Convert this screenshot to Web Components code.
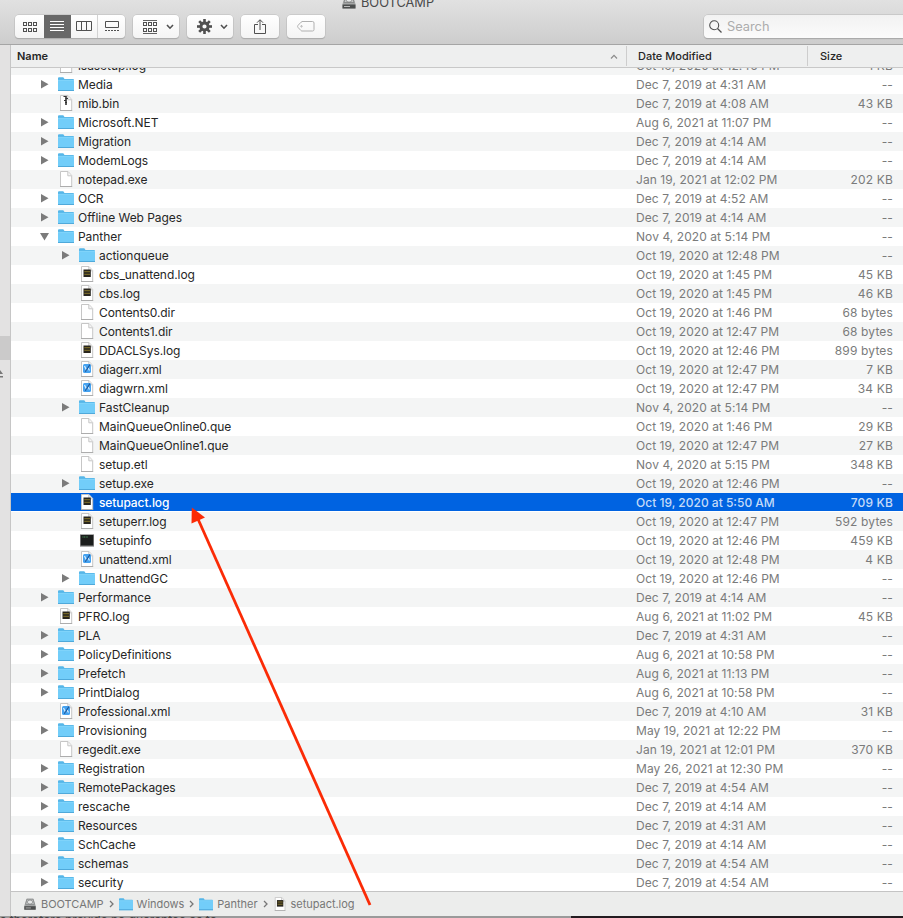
<!DOCTYPE html>
<html lang="en">
<head>
<meta charset="UTF-8">
<title>BOOTCAMP</title>
<style>
  body {
    margin: 0;
    width: 903px;
    height: 918px;
    overflow: hidden;
    font-family: Inter, "Liberation Sans", sans-serif;
    font-size: 12px;
    color: #262626;
  }
</style>
</head>
<body>
<finder-window></finder-window>
<script>
// name | depth | kind | date | size
const FILES = `isasetup.log|0|log|Oct 19, 2020 at 12:46 PM|1 KB
Media|0|folder|Dec 7, 2019 at 4:31 AM|--
mib.bin|0|zip|Dec 7, 2019 at 4:08 AM|43 KB
Microsoft.NET|0|folder|Aug 6, 2021 at 11:07 PM|--
Migration|0|folder|Dec 7, 2019 at 4:14 AM|--
ModemLogs|0|folder|Dec 7, 2019 at 4:14 AM|--
notepad.exe|0|file|Jan 19, 2021 at 12:02 PM|202 KB
OCR|0|folder|Dec 7, 2019 at 4:52 AM|--
Offline Web Pages|0|folder|Dec 7, 2019 at 4:14 AM|--
Panther|0|open|Nov 4, 2020 at 5:14 PM|--
actionqueue|1|folder|Oct 19, 2020 at 12:48 PM|--
cbs_unattend.log|1|log|Oct 19, 2020 at 1:45 PM|45 KB
cbs.log|1|log|Oct 19, 2020 at 1:45 PM|46 KB
Contents0.dir|1|file|Oct 19, 2020 at 1:46 PM|68 bytes
Contents1.dir|1|file|Oct 19, 2020 at 12:47 PM|68 bytes
DDACLSys.log|1|log|Oct 19, 2020 at 12:46 PM|899 bytes
diagerr.xml|1|xml|Oct 19, 2020 at 12:47 PM|7 KB
diagwrn.xml|1|xml|Oct 19, 2020 at 12:47 PM|34 KB
FastCleanup|1|folder|Nov 4, 2020 at 5:14 PM|--
MainQueueOnline0.que|1|file|Oct 19, 2020 at 1:46 PM|29 KB
MainQueueOnline1.que|1|file|Oct 19, 2020 at 12:47 PM|27 KB
setup.etl|1|file|Nov 4, 2020 at 5:15 PM|348 KB
setup.exe|1|folder|Oct 19, 2020 at 12:46 PM|--
setupact.log|1|log|Oct 19, 2020 at 5:50 AM|709 KB
setuperr.log|1|log|Oct 19, 2020 at 12:47 PM|592 bytes
setupinfo|1|exec|Oct 19, 2020 at 12:46 PM|459 KB
unattend.xml|1|xml|Oct 19, 2020 at 12:48 PM|4 KB
UnattendGC|1|folder|Oct 19, 2020 at 12:46 PM|--
Performance|0|folder|Dec 7, 2019 at 4:14 AM|--
PFRO.log|0|log|Aug 6, 2021 at 11:02 PM|45 KB
PLA|0|folder|Dec 7, 2019 at 4:31 AM|--
PolicyDefinitions|0|folder|Aug 6, 2021 at 10:58 PM|--
Prefetch|0|folder|Aug 6, 2021 at 11:13 PM|--
PrintDialog|0|folder|Aug 6, 2021 at 10:58 PM|--
Professional.xml|0|xml|Dec 7, 2019 at 4:10 AM|31 KB
Provisioning|0|folder|May 19, 2021 at 12:22 PM|--
regedit.exe|0|file|Jan 19, 2021 at 12:01 PM|370 KB
Registration|0|folder|May 26, 2021 at 12:30 PM|--
RemotePackages|0|folder|Dec 7, 2019 at 4:54 AM|--
rescache|0|folder|Dec 7, 2019 at 4:14 AM|--
Resources|0|folder|Dec 7, 2019 at 4:31 AM|--
SchCache|0|folder|Dec 7, 2019 at 4:14 AM|--
schemas|0|folder|Dec 7, 2019 at 4:54 AM|--
security|0|folder|Dec 7, 2019 at 4:54 AM|--`.split('\n').map(line => line.split('|'));

const SELECTED = 'setupact.log';

const PAGE = `<path d="M2.500 .5h7.500l3.700 4v11h-11.200z" fill="#fff" stroke="#c6c6c6"/><path d="M9.800 .8v4h3.700" fill="#f6f6f6" stroke="#c6c6c6"/><path d="M2 15.500h12.200" stroke="#adadad"/>`;

const ICONS = {
  folder: `<path d="M0 2.300q0-1 1-1h4.300l1.200 1.700h8.500q1 0 1 1v11h-16z" fill="#56b6e8"/><path d="M0 4h16v10.500h-16z" fill="#72cdf9"/><path d="M0 4.300h16" stroke="#8bd9fc" stroke-width=".7"/><path d="M0 14.500h16" stroke="#4fa9da"/>`,
  file: PAGE,
  log: PAGE + `<path d="M4.500 3.500h7.300v7.500h-7.300z" fill="#29261e"/><path d="M5.300 5.700h5.700M5.300 8.300h5.700" stroke="#a08c2e" stroke-width=".8"/>`,
  zip: PAGE + `<path d="M7 1h2v9h-2z" fill="#5a5a5a"/><path d="M5.500 1.500h2.500M7.500 3.500h2.500M6 5.500h2M7 7.500h2" stroke="#333"/>`,
  xml: PAGE + `<rect x="4" y="3" width="8" height="9" rx="1.500" fill="#45a2f0"/><path d="M5.500 5l2.200 4.500M10.500 9.500l-1.500-2.500" fill="none" stroke="#d8eeff" stroke-width="1.200"/><path d="M6.300 10.800l4.700-7.300" stroke="#1d5798" stroke-width="1.200"/>`,
  exec: `<path d="M1 2.300h14v12.400h-14z" fill="#8a8a8a"/><path d="M1.700 3h12.600v10.500h-12.600z" fill="#1b1d1c"/><path d="M3.500 5h5.500" stroke="#4c9a5c" stroke-dasharray="1 .6"/>`,
  disk: `<path d="M4 2h8l2.500 8v4.500h-13v-4.500z" fill="#a3a5a5"/><path d="M4.500 2.500h7l1.500 6h-10z" fill="#c5c8c8" stroke="#808282" stroke-width=".8"/><ellipse cx="8" cy="5.800" rx="3" ry="2.300" fill="#e6e8e8" stroke="#777" stroke-width=".7"/><path d="M1.500 10.500h13v4h-13z" fill="#4c4e4e"/><path d="M3 12.500h6" stroke="#bbb"/>`
};

class FileIcon extends HTMLElement {
  connectedCallback() {
    this.attachShadow({ mode: 'open' }).innerHTML = `
      <style>
        :host { display: block; flex: none; width: 16px; height: 16px; }
        svg { display: block; width: 100%; height: 100%; }
      </style>
      <svg viewBox="0 0 16 16">${ICONS[this.getAttribute('kind')]}</svg>
    `;
  }
}

class ToolButton extends HTMLElement {
  constructor() {
    super();
    this.attachShadow({ mode: 'open' }).innerHTML = `
      <style>
        :host {
          display: flex;
          box-sizing: border-box;
          height: 23px;
          overflow: hidden;
          border-radius: 4px;
          background: linear-gradient(#fff, #f4f4f4);
          box-shadow: 0 0 0 .5px #bcbcbc, 0 1px 1px #9b9b9b;
        }
      </style>
      <slot></slot>
    `;
  }
}

class FinderToolbar extends HTMLElement {
  constructor() {
    super();
    const grid = (y) => [0, 5, 10].map(x => `<rect x="${x + .5}" y="${y + .5}" width="3" height="3"/>`).join('');
    const chevron = '<svg width="8" height="6" class="bold"><path d="M1 1l3 3.200l3-3.200"/></svg>';
    const teeth = [0, 45, 90, 135, 180, 225, 270, 315]
      .map(a => `<rect x="6.200" y="0" width="2.600" height="4" transform="rotate(${a} 7.500 7.500)"/>`).join('');
    this.attachShadow({ mode: 'open' }).innerHTML = `
      <style>
        :host {
          display: block;
          height: 44px;
          overflow: hidden;
          background: linear-gradient(#e1e1e1, #cdcdcd);
          border-bottom: 1px solid #a5a5a5;
        }
        .title {
          display: flex;
          align-items: center;
          gap: 4px;
          height: 16px;
          margin-top: -6px;
          padding-left: 341px;
          font-size: 12.8px;
          color: #4a4a4a;
        }
        .tools { display: flex; margin: 5px 0 0 15px; }
        .tools > * + * { margin-left: 8px; }
        .seg {
          display: flex;
          align-items: center;
          justify-content: center;
          width: 26px;
          border-right: 1px solid #d2d2d2;
        }
        .seg:first-child { width: 29px; border: 0; }
        .seg:last-child { border: 0; width: 27px; }
        .seg.on { background: #686868; border-color: #686868; }
        .seg.on svg { stroke: #fff; }
        svg { fill: none; stroke: #505050; }
        svg.bold { stroke-width: 1.600; }
        .menu { display: flex; align-items: center; width: 46px; justify-content: space-between; padding: 0 5px 0 10px; box-sizing: border-box; }
        .single { display: flex; align-items: center; justify-content: center; width: 38px; }
        .tools > .search {
          display: flex;
          align-items: center;
          gap: 5px;
          flex: 1;
          margin-left: 379px;
          padding-left: 5px;
          border-radius: 4px 0 0 4px;
          background: linear-gradient(#f2f2f2, #fbfbfb);
          box-shadow: 0 0 0 .5px #b8b8b8, 0 1px 1px #999;
          font-size: 12.8px;
          color: #acacac;
        }
      </style>
      <div class="title"><file-icon kind="disk"></file-icon><span>BOOTCAMP</span></div>
      <div class="tools">
        <tool-button>
          <div class="seg"><svg width="14" height="10">${grid(0)}${grid(6)}</svg></div>
          <div class="seg on"><svg width="14" height="11"><path d="M0 .5h14M0 3.500h14M0 6.500h14M0 9.500h14"/></svg></div>
          <div class="seg"><svg width="16" height="11"><path d="M.5 .5h15v9h-15zM5.500 .5v9M10.500 .5v9"/></svg></div>
          <div class="seg"><svg width="14" height="11"><path d="M.5 .5h13v6h-13zM0 9.500h14" /><path d="M2.500 8.500v2M5.500 8.500v2M8.500 8.500v2M11.500 8.500v2" stroke="#fafafa"/></svg></div>
        </tool-button>
        <tool-button><div class="menu"><svg width="14" height="14"><path d="M0 .5h14M0 13.500h14" stroke-opacity=".9"/>${grid(2)}${grid(8)}</svg>${chevron}</div></tool-button>
        <tool-button><div class="menu"><svg width="15" height="15"><g fill="#505050" stroke="none">${teeth}</g><circle cx="7.500" cy="7.500" r="3.600" stroke-width="3"/></svg>${chevron}</div></tool-button>
        <tool-button><div class="single"><svg width="12" height="16"><path d="M4 5.500h-3.500v9h11v-9h-3.500M6 11v-10M3 3.700l3-3l3 3"/></svg></div></tool-button>
        <tool-button><div class="single"><svg width="18" height="11" style="stroke:#b0b0b0"><path d="M5 .5h10.500q1.500 0 1.500 1.500v6.500q0 1.500-1.500 1.500h-10.500q-.6 0-1-.4l-3-3.200q-.8-1 0-2l3-3.200q.4-.2 1-.2z"/><circle cx="4.500" cy="5.300" r=".7"/></svg></div></tool-button>
        <div class="search"><svg width="13" height="13"><circle cx="5.200" cy="5.200" r="4.500" stroke-width="1.100"/><path d="M8.500 8.500l4 4" stroke-width="1.200"/></svg><span>Search</span></div>
      </div>
    `;
  }
}

class ColumnHeader extends HTMLElement {
  constructor() {
    super();
    this.attachShadow({ mode: 'open' }).innerHTML = `
      <style>
        :host {
          display: flex;
          flex: none;
          align-items: center;
          box-sizing: border-box;
          height: 23px;
          background: #eeefef;
          border-bottom: 1px solid #c8c8c8;
          font-size: 11px;
          font-weight: 500;
        }
        div { display: flex; align-items: center; box-sizing: border-box; height: 20px; }
        .name { width: 616px; padding: 0 8px 0 6px; justify-content: space-between; border-right: 1px solid #cdcdcd; font-weight: 600; }
        .date { width: 181px; padding-left: 11px; border-right: 1px solid #cdcdcd; }
        .size { padding-left: 12px; }
        svg { fill: none; stroke: #8b8b8b; stroke-width: 1.200; }
      </style>
      <div class="name"><span>Name</span><svg width="8" height="5"><path d="M1 4.500l3-3.200l3 3.200"/></svg></div>
      <div class="date"><span>Date Modified</span></div>
      <div class="size"><span>Size</span></div>
    `;
  }
}

class FileRow extends HTMLElement {
  set file([name, depth, kind, date, size]) {
    const isFolder = kind === 'folder' || kind === 'open';
    const arrow = kind === 'open' ? 'M0 2h9l-4.500 7.500z' : 'M1 1v8.500l7.500-4.250z';
    this.toggleAttribute('selected', name === SELECTED);
    this.attachShadow({ mode: 'open' }).innerHTML = `
      <style>
        :host { display: flex; flex: none; align-items: center; height: 19px; line-height: 19px; white-space: nowrap; }
        .name { display: flex; align-items: center; width: 625px; box-sizing: border-box; padding-left: ${29 + depth * 21}px; letter-spacing: -.05px; }
        .arrow { width: 10px; height: 10px; margin: 0 8px 1px 0; fill: #7b7b7b; }
        file-icon { margin: 0 4px 1px 0; }
        .date { flex: 1; color: #7a7b7b; letter-spacing: .07px; }
        .size { padding-right: 10px; color: #7a7b7b; letter-spacing: .15px; }
        :host([selected]) {
          color: #fff;
          font-weight: 500;
          background: linear-gradient(#0063e1 18px, #fff 18px);
        }
        :host([selected]) .name { letter-spacing: -.1px; }
        :host([selected]) .date { letter-spacing: 0; }
        :host([selected]) .date, :host([selected]) .size { color: #c5dbf8; }
      </style>
      <div class="name">
        <svg class="arrow">${isFolder ? `<path d="${arrow}"/>` : ''}</svg>
        <file-icon kind="${isFolder ? 'folder' : kind}"></file-icon>
        <span>${name}</span>
      </div>
      <div class="date"><span>${date}</span></div>
      <div class="size"><span>${size}</span></div>
    `;
  }
}

class FileList extends HTMLElement {
  connectedCallback() {
    const shadow = this.attachShadow({ mode: 'open' });
    shadow.innerHTML = `
      <style>
        :host { display: flex; flex-direction: column; flex: 1; min-height: 0; overflow: hidden; background: #fff; }
        file-row:nth-of-type(odd) { background: #f4f5f5; }
        /* list is scrolled part way into its first row */
        file-row:first-of-type { margin-top: -12px; }
      </style>
    `;
    FILES.forEach(file => {
      const row = document.createElement('file-row');
      row.file = file;
      shadow.append(row);
    });
  }
}

class PathBar extends HTMLElement {
  constructor() {
    super();
    const parts = [['disk', 'BOOTCAMP'], ['folder', 'Windows'], ['folder', 'Panther'], ['log', 'setupact.log']];
    this.attachShadow({ mode: 'open' }).innerHTML = `
      <style>
        :host {
          display: flex;
          flex: none;
          align-items: center;
          box-sizing: border-box;
          height: 25px;
          padding-left: 12px;
          border-top: 1px solid #c4c4c4;
          background: #ecedec;
          font-size: 11px;
          color: #777;
        }
        span { letter-spacing: -.03px; }
        file-icon { width: 14px; height: 14px; margin-right: 4px; }
        svg { margin: 0 5px; fill: none; stroke: #777; stroke-width: 1.300; }
      </style>
      ${parts.map(([kind, name]) => `<file-icon kind="${kind}"></file-icon><span>${name}</span>`)
        .join('<svg width="5" height="8"><path d="M1 1l3 3l-3 3"/></svg>')}
    `;
  }
}

class FinderWindow extends HTMLElement {
  constructor() {
    super();
    this.attachShadow({ mode: 'open' }).innerHTML = `
      <style>
        :host { display: flex; flex-direction: column; position: relative; width: 903px; height: 918px; overflow: hidden; }
        .body { display: flex; height: 871px; }
        .side {
          display: flex;
          flex-direction: column;
          width: 10px;
          background: #e3e2e2;
          border-right: 1px solid #c6c6c6;
        }
        .mark { height: 24px; margin-top: 291px; background: #cbcaca; }
        .side svg { margin-top: 9px; fill: #777; }
        .main { display: flex; flex-direction: column; flex: 1; min-width: 0; }
        .behind { display: flex; flex: 1; background: #231c20; }
        .behind div { width: 571px; height: 2px; overflow: hidden; background: #9a9a9a; color: #444; line-height: 8px; }
        .pointer { position: absolute; left: 0; top: 0; }
      </style>
      <finder-toolbar></finder-toolbar>
      <div class="body">
        <div class="side"><div class="mark"></div><svg width="4" height="10"><path d="M0 1l3 4h-3zM0 7h3v1.500h-3z"/></svg></div>
        <div class="main">
          <column-header></column-header>
          <file-list></file-list>
          <path-bar></path-bar>
        </div>
      </div>
      <div class="behind"><div>s therefore provide no guarantee as to</div></div>
      <svg class="pointer" width="903" height="918">
        <path d="M370 905L198 519" stroke="#fb2b06" stroke-width="2.800"/>
        <path d="M191.800 507.500l13.200 10l-13.500 6z" fill="#fb2b06"/>
      </svg>
    `;
  }
}

customElements.define('file-icon', FileIcon);
customElements.define('tool-button', ToolButton);
customElements.define('finder-toolbar', FinderToolbar);
customElements.define('column-header', ColumnHeader);
customElements.define('file-row', FileRow);
customElements.define('file-list', FileList);
customElements.define('path-bar', PathBar);
customElements.define('finder-window', FinderWindow);
</script>
</body>
</html>
